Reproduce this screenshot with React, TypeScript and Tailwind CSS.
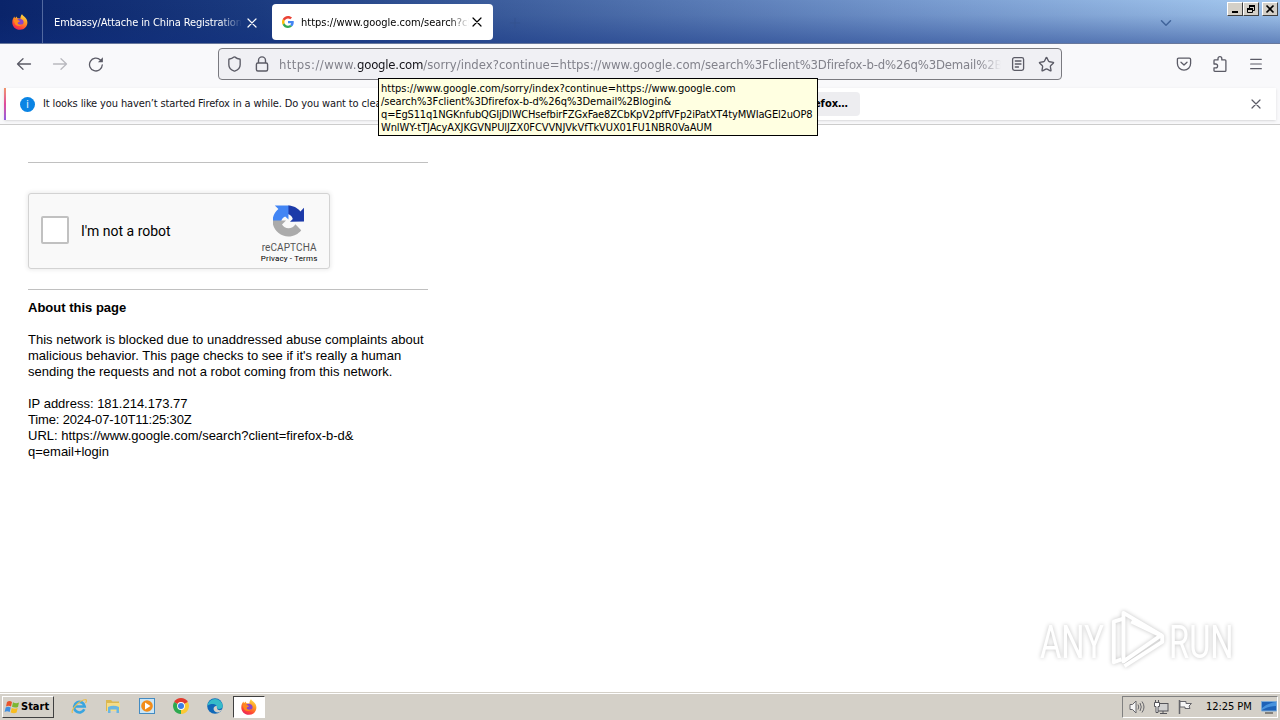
import React from 'react';
import { ChevronDown, Menu, Plus, Shield, Star } from 'lucide-react';

const FirefoxLogo: React.FC<{ className?: string }> = ({ className }) => (
  <svg className={className} viewBox="0 0 16 16">
    <defs>
      <linearGradient id="fox" x1="0.8" y1="0" x2="0.3" y2="1">
        <stop offset="0" stopColor="#ffe14a" />
        <stop offset="0.4" stopColor="#ff9a22" />
        <stop offset="0.75" stopColor="#ff4a35" />
        <stop offset="1" stopColor="#e9215c" />
      </linearGradient>
    </defs>
    <path d="M10 0.2C11 2 13.3 3 14.6 5.2C17 10 13.8 15.8 8 15.8C3.4 15.8 0.3 12.4 0.3 8.4C0.3 5.8 1.2 4 2.4 2.6L3 4.2L4.6 2.4L5.4 4.2C6.8 4 7.6 4.4 8.4 4.6C8.4 2.8 9 1.2 10 0.2Z" fill="url(#fox)" />
    <path d="M5.2 6C6 5 7.4 4.6 8.8 5C10.8 5.4 11.8 7 11.6 8.6C11.4 10.2 10 11.2 8.2 11.1C6.2 11 4.8 10 4.8 8.4L6.8 7.8L8 7Z" fill="#8a45c8" />
    <path d="M1.6 6.2C3.4 5.4 5.6 5.8 7.8 7.3C7 8 6 8.2 5.6 9C6 10.6 8 11.2 10 10.2C9 12.4 4.8 12.8 3 10Z" fill="#ff8a1c" />
  </svg>
);

const GoogleLogo: React.FC = () => (
  <svg className="h-3 w-3 shrink-0" viewBox="0 0 48 48">
    <path fill="#ea4335" d="M24 9.5c3.5 0 6.7 1.2 9.2 3.6l6.9-6.9C35.9 2.4 30.5 0 24 0 14.6 0 6.5 5.4 2.6 13.2l8 6.2C12.4 13.7 17.7 9.5 24 9.5z" />
    <path fill="#4285f4" d="M47 24.6c0-1.6-.2-3.1-.4-4.6H24v9h12.9c-.6 3-2.2 5.5-4.8 7.2l7.7 6C44.4 38 47 31.8 47 24.6z" />
    <path fill="#fbbc05" d="M10.5 28.6c-.5-1.5-.8-3-.8-4.6s.3-3.1.8-4.6l-8-6.2C1 16.5 0 20.1 0 24s1 7.5 2.6 10.8z" />
    <path fill="#34a853" d="M24 48c6.5 0 11.9-2.1 15.9-5.8l-7.7-6c-2.2 1.5-4.9 2.3-8.2 2.3-6.3 0-11.6-4.2-13.5-9.9l-8 6.2C6.5 42.6 14.6 48 24 48z" />
  </svg>
);

const CloseIcon: React.FC<{ className?: string }> = ({ className }) => (
  <svg className={`h-3 w-3 shrink-0 ${className ?? ''}`} viewBox="0 0 12 12" fill="none" stroke="currentColor" strokeWidth="1.2" strokeLinecap="round">
    <path d="M2 2L10 10M10 2L2 10" />
  </svg>
);

const BackIcon: React.FC<{ className?: string }> = ({ className }) => (
  <svg className={`h-4 w-4 ${className ?? ''}`} viewBox="0 0 16 16" fill="none" stroke="currentColor" strokeWidth="1.3" strokeLinecap="round" strokeLinejoin="round">
    <path d="M14.5 8H1.5M7 2.8L1.5 8L7 13.2" />
  </svg>
);

const ReloadIcon: React.FC = () => (
  <svg className="h-4 w-4" viewBox="0 0 16 16" fill="none" stroke="currentColor" strokeWidth="1.3" strokeLinecap="round">
    <path d="M14.3 8.8A6.4 6.4 0 1 1 12.4 4" />
    <path d="M14.9 1.2V6.2H9.9Z" fill="currentColor" stroke="none" />
  </svg>
);

const LockIcon: React.FC = () => (
  <svg className="ml-3 h-4 w-4" viewBox="0 0 16 16" fill="none" stroke="currentColor" strokeWidth="1.4">
    <rect x="2.4" y="7" width="11.2" height="8" rx="1.5" />
    <path d="M4.5 7V4.4A3.5 3.5 0 0 1 11.500 4.400V7" />
  </svg>
);

const ReaderIcon: React.FC = () => (
  <svg className="h-4 w-4" viewBox="0 0 16 16" fill="none" stroke="currentColor" strokeWidth="1.3" strokeLinecap="round">
    <rect x="2.6" y="1.6" width="11" height="12.8" rx="1.8" />
    <path d="M5.3 5H11M5.3 8H11M5.3 11H8.5" />
  </svg>
);

const PocketIcon: React.FC = () => (
  <svg className="h-4 w-4" viewBox="0 0 16 16" fill="none" stroke="currentColor" strokeWidth="1.3" strokeLinecap="round" strokeLinejoin="round">
    <path d="M2.7 2.2H13.3Q14.6 2.2 14.6 3.5V7.5A6.6 6.6 0 0 1 1.4 7.5V3.5Q1.4 2.2 2.7 2.2Z" />
    <path d="M5 6.3L8 9L11 6.3" />
  </svg>
);

const ExtensionIcon: React.FC = () => (
  <svg className="h-4 w-4" viewBox="0 0 16 16" fill="none" stroke="currentColor" strokeWidth="1.3" strokeLinejoin="round">
    <path d="M2 7V4.700Q2 3.900 2.800 3.900H6V2.600A1.900 1.900 0 0 1 9.800 2.600V3.900H13Q13.900 3.900 13.900 4.800V14.400Q13.900 15.300 13 15.300H2.800Q2 15.300 2 14.500V11.800H3.700A1.900 1.900 0 0 0 3.700 8H2Z" />
  </svg>
);

const RecaptchaLogo: React.FC = () => (
  <svg className="h-8 w-8" viewBox="0 0 64 64">
    <path fill="#1c3aa9" d="M64 32a33 33 0 0 0-.03-1.37V4.6l-7.2 7.2C50.900 4.600 42 0 32 0v17.200c4.400 1.500 8 4 9.600 9.700L36 32.500z" transform="translate(-2 1)" />
    <path fill="#4285f4" d="M31.900 0H4.600l7.200 7.200C4.600 13.100 0 22 0 32h17.300c1-5 4.500-8.700 8-10l6.700 6z" transform="translate(-1 1)" />
    <path fill="#ababab" d="M0 32c0 17.700 14.300 32 32 32 10.400 0 19.600-4.900 25.400-12.600L45.700 39.700c-2.800 5-8 7.800-13.700 7.800-5.500 0-10.300-2.800-13-7.500l8-8z" transform="translate(-1 -1)" />
  </svg>
);

const WindowButton: React.FC<{ children: React.ReactNode }> = ({ children }) => (
  <div className="flex h-[14px] w-4 items-center justify-center border border-t-white border-r-[#404040] border-b-[#404040] border-l-white bg-[#d4d0c8]">
    <svg className="h-[10px] w-3" viewBox="0 0 12 10" fill="none" stroke="black">
      {children}
    </svg>
  </div>
);

const TabBar: React.FC = () => (
  <div className="flex h-[43px] shrink-0 bg-[linear-gradient(to_bottom,rgba(10,36,106,0)_0%,rgba(10,36,106,0.08)_35%,rgba(15,45,125,0.45)_100%),linear-gradient(to_right,#0a246a_0%,#1b3b80_20%,#7497cd_70%,#a6caf0_100%)] text-[11px]">
    <div className="flex w-[43px] items-center justify-center border-r border-[#5269a0] pr-[3px]">
      <FirefoxLogo className="h-4 w-4" />
    </div>
    <div className="flex w-[229px] items-center pt-[2px] pl-[11px] text-white">
      <span className="w-[188px] overflow-hidden pt-px whitespace-nowrap tracking-[-0.12px] [mask-image:linear-gradient(to_right,black_88%,transparent)]">
        Embassy/Attache in China Registration
      </span>
      <CloseIcon className="ml-[4px]" />
    </div>
    <div className="mt-1 flex h-9 w-[221px] items-center rounded bg-white pl-[10px] text-black">
      <GoogleLogo />
      <span className="ml-[7px] w-[168px] overflow-hidden pt-[3px] whitespace-nowrap [mask-image:linear-gradient(to_right,black_88%,transparent)]">
        https://www.google.com/search?client=
      </span>
      <CloseIcon className="ml-[2px]" />
    </div>
    <Plus className="mt-[15px] ml-[14px] h-4 w-4 text-[#34528f]" strokeWidth={1.5} />
    <ChevronDown className="mt-[14px] ml-auto h-[18px] w-[18px] text-[#41649b]" strokeWidth={2} />
    <div className="mt-[2px] mr-[2px] ml-[52px] flex">
      <WindowButton>
        <path d="M3 8H9" strokeWidth="2" />
      </WindowButton>
      <WindowButton>
        <path d="M4 1.5H10M4.5 1V4M9.5 1V6.5H7M4 2.500H10" />
        <path d="M2 4.5H8M2 5.500H8M2.5 4V8.5H7.5V4" />
      </WindowButton>
      <div className="ml-[3px]">
        <WindowButton>
          <path d="M2.500 1.500L9.500 8.500M9.500 1.500L2.500 8.500" strokeWidth="1.7" />
        </WindowButton>
      </div>
    </div>
  </div>
);

const Toolbar: React.FC = () => (
  <div className="flex h-11 shrink-0 items-center bg-[#f9f9fb] pb-1 text-[#5b5b66]">
    <div className="flex w-[218px] gap-5 pl-4">
      <BackIcon />
      <BackIcon className="rotate-180 text-[#b9b9bf]" />
      <ReloadIcon />
    </div>
    <div className="flex h-8 w-[844px] items-center rounded border border-[#7a7a80] bg-[#f0f0f4] pl-[7px]">
      <Shield className="h-[18px] w-[17px]" strokeWidth={1.9} />
      <div className="-ml-px">
        <LockIcon />
      </div>
      <span className="ml-[9px] w-[722px] overflow-hidden pt-px text-[13px] whitespace-nowrap text-[#82828b] [mask-image:linear-gradient(to_right,black_97%,transparent)]">
        <span className="tracking-[0.4px]">https://www.</span>
        <span className="tracking-[-0.2px] text-[#15141a]">google.com</span>
        <span>/sorry/index?continue=https://www.google.com/search</span>
        <span className="tracking-[-0.17px]">%3Fclient%3Dfirefox-b-d%26q%3Demail%2Blogin</span>
      </span>
      <div className="ml-[9px] flex gap-3">
        <ReaderIcon />
        <Star className="h-[17px] w-[17px]" strokeWidth={1.9} />
      </div>
    </div>
    <div className="ml-auto flex gap-5 pr-4">
      <PocketIcon />
      <ExtensionIcon />
      <Menu className="h-4 w-4" strokeWidth={1.8} />
    </div>
  </div>
);

const NotificationBar: React.FC = () => (
  <div className="relative h-[37px] shrink-0 border-b border-[#cccccc] bg-[#f9f9fb] px-1 text-[11px]">
    <div className="flex h-8 items-center bg-white shadow-sm">
      <div className="h-8 w-[2px] bg-gradient-to-b from-[#f0956a] via-[#e0489b] to-[#9059e0]" />
      <div className="ml-[14px] flex h-[15px] w-[15px] items-center justify-center rounded-full bg-[#0a84e4] text-[10px] text-white">i</div>
      <span className="ml-2 w-[340px] overflow-hidden tracking-[-0.13px] whitespace-nowrap text-[#15141a]">
        It looks like you haven’t started Firefox in a while. Do you want to clean it up
      </span>
      <div className="flex h-6 w-[477px] items-center justify-end rounded bg-[#ededf0] pr-3 font-bold">Refresh Firefox…</div>
      <CloseIcon className="mr-[14px] ml-auto text-[#5b5b66]" />
    </div>
    <div className="absolute top-[-10px] left-[378px] z-10 h-[58px] w-[440px] border border-black bg-[#ffffe1] px-[2px] pt-[3px] leading-[13px] whitespace-nowrap text-black">
      <div>https://www.google.com/sorry/index?continue=https://www.google.com</div>
      <div className="tracking-[-0.04px]">/search%3Fclient%3Dfirefox-b-d%26q%3Demail%2Blogin&amp;</div>
      <div className="tracking-[-0.15px]">q=EgS11q1NGKnfubQGIjDlWCHsefbirFZGxFae8ZCbKpV2pffVFp2iPatXT4tyMWIaGEl2uOP8</div>
      <div className="tracking-[-0.1px]">WnlWY-tTJAcyAXJKGVNPUlJZX0FCVVNJVkVfTkVUX01FU1NBR0VaAUM</div>
    </div>
  </div>
);

const Watermark: React.FC = () => (
  <div className="absolute right-[46px] bottom-[18px] flex h-[68px] items-center font-['Roboto'] text-[46px] leading-none text-white [filter:drop-shadow(0_0_2px_rgba(0,0,0,0.24))]">
    <span className="w-[67px] origin-left scale-x-[0.71] pt-[3px]">ANY</span>
    <svg className="h-[64px] w-[62px]" viewBox="0 0 64 64" fill="none" stroke="white" strokeWidth="4" strokeLinejoin="round">
      <path d="M17 4L56 27L17 54Z" />
      <path d="M17 10L7 13V55L15 52" />
      <path d="M18 59L57 34V28L25 13" />
    </svg>
    <span className="w-[65px] origin-left scale-x-[0.71] pt-[3px]">RUN</span>
  </div>
);

const BlockedPage: React.FC = () => (
  <div className="relative flex-1 bg-white px-7 pt-[37px] font-['Liberation_Sans',sans-serif] text-[13px] leading-4 text-black">
    <div className="w-[400px]">
      <hr className="border-[#c0c0c0]" />
      <div className="mt-[30px] flex h-[76px] w-[302px] items-center rounded-[3px] border border-[#d3d3d3] bg-[#f9f9f9] pl-3 shadow-[0_0_4px_1px_rgba(0,0,0,0.08)]">
        <div className="mb-[2px] h-7 w-7 rounded-[2px] border-2 border-[#c1c1c1] bg-white" />
        <span className="ml-3 w-[169px] font-['Roboto'] text-[14px]">I'm not a robot</span>
        <div className="flex w-[80px] flex-col items-center pt-[7px] font-['Roboto'] text-[#555555]">
          <RecaptchaLogo />
          <span className="mt-[5px] text-[10px] leading-[11px] tracking-[0.1px]">reCAPTCHA</span>
          <span className="text-[8px] leading-3 tracking-[0.15px] text-black">Privacy - Terms</span>
        </div>
      </div>
      <hr className="mt-5 border-[#c0c0c0]" />
      <p className="mt-[10px] font-bold">About this page</p>
      <p className="mt-4 tracking-[0.015px] whitespace-nowrap">
        This network is blocked due to unaddressed abuse complaints about
        <br />
        malicious behavior. This page checks to see if it's really a human
        <br />
        sending the requests and not a robot coming from this network.
      </p>
      <p className="mt-4">
        IP address: 181.214.173.77
        <br />
        <span className="tracking-[-0.16px]">Time: 2024-07-10T11:25:30Z</span>
        <br />
        URL: https://www.google.com/search?client=firefox-b-d&amp;
        <br />
        q=email+login
      </p>
    </div>
    <Watermark />
  </div>
);

const Taskbar: React.FC = () => (
  <div className="flex h-7 shrink-0 items-center border-t border-[#d4d0c8] bg-[#d4d0c8] pb-px text-[11px] text-black shadow-[inset_0_1px_0_white]">
    <div className="mt-px ml-[2px] flex h-[22px] w-[52px] items-center gap-px border border-t-white border-r-[#404040] border-b-[#404040] border-l-white pl-px font-bold">
      <svg className="h-4 w-4 shrink-0" viewBox="0 0 16 16">
        <path d="M3 3Q5.5 1.2 8 3L7 7.5Q4.5 6 2 7.5Z" fill="#e8542b" />
        <path d="M9 3.3Q12 5 15 3.5L14 8Q11 9.2 8 7.8Z" fill="#7cb733" />
        <path d="M1.7 8.5Q4 7 6.7 8.5L5.7 13Q3 11.5 .6 13Z" fill="#3f8fe0" />
        <path d="M7.7 9Q11 10.5 13.7 9L12.6 13.5Q10 15 6.7 13.4Z" fill="#f8bd20" />
      </svg>
      <span className="pt-px">Start</span>
    </div>
    <div className="ml-[17px] flex items-center gap-[18px]">
      {/* Internet Explorer */}
      <svg className="h-4 w-4" viewBox="0 0 16 16" fill="none">
        <path d="M13.3 11.3A5.300 5.300 0 1 1 13.7 8.500H4" stroke="#39a5e0" strokeWidth="2.6" />
        <path d="M1.5 15C-.5 12 8 2 15 1.5Q16 3 14.5 5" stroke="#e9bd4c" strokeWidth="1.2" />
      </svg>
      {/* Explorer */}
      <svg className="h-4 w-4" viewBox="0 0 16 16">
        <path d="M1 2H6L7.5 3.5H14V13H1Z" fill="#dcb850" />
        <path d="M2 5H15V13H2Z" fill="#f5dc88" />
        <path d="M3 9Q8.5 6.5 14 9V15H11.5V11.5H5.5V15H3Z" fill="#6ab6e2" />
      </svg>
      {/* Media Player */}
      <svg className="h-4 w-4" viewBox="0 0 16 16">
        <rect x="0.5" y="0.5" width="15" height="15" fill="#cce6f6" stroke="#438bc2" />
        <circle cx="8" cy="8" r="5.8" fill="#f28c18" />
        <path d="M6 4.5L11.5 8L6 11.5Z" fill="white" />
      </svg>
      {/* Chrome */}
      <svg className="h-4 w-4" viewBox="0 0 16 16">
        <path d="M8 8L1.1 4A8 8 0 0 1 14.9 4Z" fill="#e33b2e" />
        <path d="M8 8L14.9 4A8 8 0 0 1 8 16Z" fill="#fcc934" />
        <path d="M8 8V16A8 8 0 0 1 1.1 4Z" fill="#2da94f" />
        <circle cx="8" cy="8" r="3.9" fill="white" />
        <circle cx="8" cy="8" r="3" fill="#3c7de6" />
      </svg>
      {/* Edge */}
      <svg className="h-4 w-4" viewBox="0 0 16 16">
        <circle cx="8" cy="8" r="7.8" fill="#1068b8" />
        <path d="M.3 8A7.8 7.8 0 0 1 15.8 8C15.6 11 12 11.5 10 10.5C11.5 7 5 4 .3 8Z" fill="#35bbc9" />
        <path d="M10 10C10 12 12.5 13 15 11.5C13 15.5 8 15 6.8 12C6 9.5 8 8 9.5 7.8C10.3 8.5 9.5 9 10 10Z" fill="#d4d0c8" />
      </svg>
    </div>
    <div className="mt-px ml-[10px] flex h-[22px] w-8 items-center justify-center border border-t-[#404040] border-r-white border-b-white border-l-[#404040] bg-white">
      <FirefoxLogo className="h-4 w-4" />
    </div>
    <div className="mt-px mr-[2px] ml-auto flex h-[22px] w-[156px] items-center border border-t-[#808080] border-r-white border-b-white border-l-[#808080] pl-[6px]">
      <svg className="h-4 w-4" viewBox="0 0 16 16" fill="none" stroke="#66666b">
        <path d="M1 5.5H3.5L7 2V14L3.5 10.5H1Z" fill="#f5f5f5" />
        <path d="M9 5.5Q10.5 8 9 10.5M11 4Q13.5 8 11 12M13 2.5Q17 8 13 13.5" />
      </svg>
      <svg className="ml-2 h-4 w-4" viewBox="0 0 16 16" fill="none" stroke="#55555a">
        <rect x="4.5" y="4.5" width="10.5" height="7.5" fill="#d0d0d0" />
        <path d="M7 14.5H14M10 12V14" />
        <path d="M1.500 3.500H6.500V7.500H5V13.500H3V7.500H1.500ZM2.500 1V3.500M5.500 1V3.500" fill="white" />
      </svg>
      <svg className="ml-2 h-4 w-4" viewBox="0 0 16 16" fill="none" stroke="#66666b">
        <path d="M2.5 1V15" strokeWidth="1.5" />
        <path d="M3 2.5H9V4.5H14.5L12 7L13 9.5H8V8H3Z" fill="#f5f5f5" />
      </svg>
      <span className="ml-[13px] pt-[2px] tracking-[-0.05px] whitespace-nowrap">12:25 PM</span>
      <svg className="ml-auto h-4 w-4" viewBox="0 0 16 16">
        <path d="M.5 2.5H15.5V12H.5Z" fill="#1d62b8" stroke="#7aa9d6" />
        <path d="M1 9Q7 4 15 3V7Q8 7 1 11Z" fill="#4793de" />
        <path d="M4 14H12" stroke="#333333" />
      </svg>
    </div>
  </div>
);

const App: React.FC = () => {
  return (
    <div className="flex h-[720px] w-[1280px] flex-col overflow-hidden bg-white font-['DejaVu_Sans_Condensed','Noto_Sans',sans-serif]">
      <TabBar />
      <div className="h-px shrink-0 bg-[#68789c]" />
      <Toolbar />
      <NotificationBar />
      <BlockedPage />
      <Taskbar />
    </div>
  );
};

export default App;
